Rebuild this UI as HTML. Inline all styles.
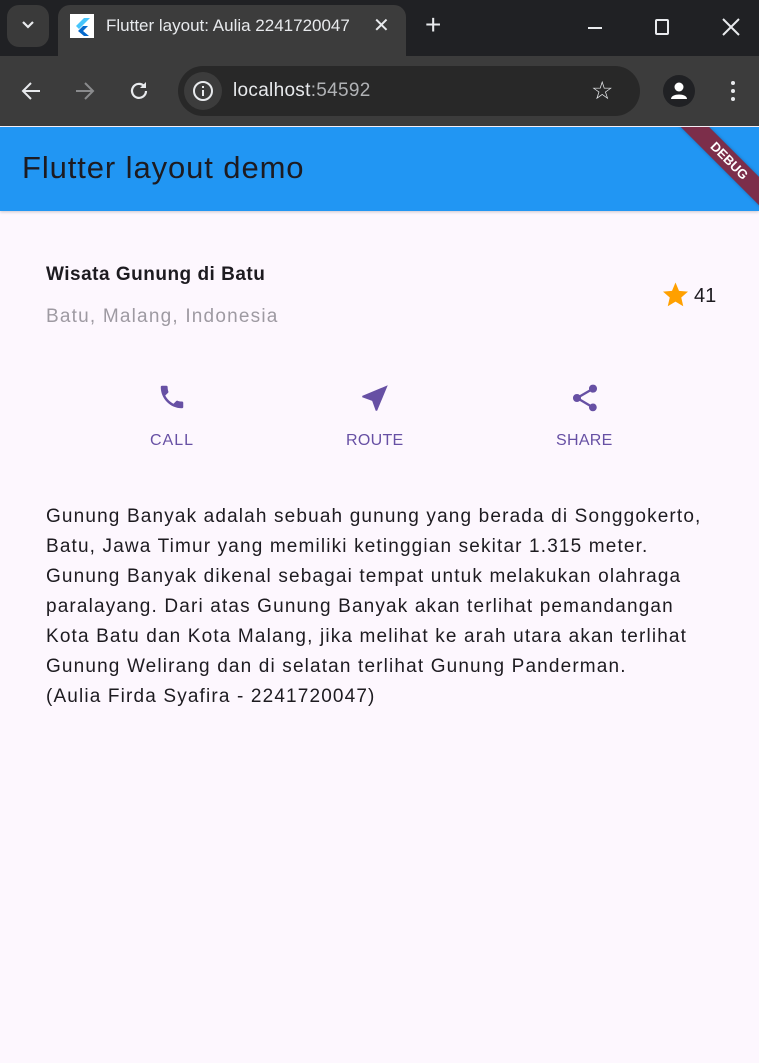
<!DOCTYPE html>
<html><head><style>
*{margin:0;padding:0;box-sizing:border-box}
body{width:759px;height:1063px;overflow:hidden;background:#fdf7fe;font-family:"Liberation Sans",sans-serif;position:relative}
.abs{position:absolute}
</style></head><body>
<div class="abs" style="left:0;top:0;width:759px;height:56px;background:#202124"></div>
<div class="abs" style="left:7px;top:5px;width:42px;height:42px;border-radius:12px;background:#3a3a3a"></div>
<svg class="abs" style="left:20px;top:19px" width="16" height="12"><path d="M3 3l5 5 5-5" stroke="#e8eaed" stroke-width="2.2" fill="none"/></svg>
<div class="abs" style="left:58px;top:5px;width:348px;height:52px;border-radius:12px 12px 0 0;background:#3c3c3c"></div>
<div class="abs" style="left:70px;top:14px;width:24px;height:24px;background:#fff"></div>
<svg class="abs" style="left:72px;top:16px" width="20" height="20"><path d="M12 2L4 10l3 3 11-11z" fill="#47c5fb"/><path d="M11 10l-5 5 6 5h5l-6-5 5-5z" fill="#0569cc"/></svg>
<div class="abs" style="left:106px;top:16px;font-size:17px;color:#e8eaed;white-space:nowrap;width:254px;overflow:hidden">Flutter layout: Aulia 2241720047</div>
<div class="abs" style="left:373px;top:13px;font-size:20px;color:#e8eaed">✕</div>
<div class="abs" style="left:425px;top:9px;font-size:28px;color:#e8eaed;font-weight:300">+</div>
<div class="abs" style="left:588px;top:27px;width:14px;height:2px;background:#e8eaed"></div>
<div class="abs" style="left:655px;top:19px;width:14px;height:16px;border:2px solid #e8eaed;border-radius:2px"></div>
<svg class="abs" style="left:722px;top:18px" width="18" height="18"><path d="M1 1l16 16M17 1L1 17" stroke="#e8eaed" stroke-width="2"/></svg>
<div class="abs" style="left:0;top:56px;width:759px;height:70px;background:#3c3c3c"></div>
<svg class="abs" style="left:20px;top:80px" width="22" height="22"><path d="M20 11H4M11 3l-8 8 8 8" stroke="#e8eaed" stroke-width="2" fill="none"/></svg>
<svg class="abs" style="left:74px;top:80px" width="22" height="22"><path d="M2 11h16M11 3l8 8-8 8" stroke="#8a8b8d" stroke-width="2" fill="none"/></svg>
<svg class="abs" style="left:128px;top:80px" width="22" height="22"><path d="M18 11a7 7 0 1 1-2-5" stroke="#e8eaed" stroke-width="2.2" fill="none"/><path d="M18 2v6h-6z" fill="#e8eaed"/></svg>
<div class="abs" style="left:178px;top:66px;width:462px;height:50px;border-radius:25px;background:#282828"></div>
<div class="abs" style="left:184px;top:72px;width:38px;height:38px;border-radius:19px;background:#3c3c3c"></div>
<svg class="abs" style="left:192px;top:80px" width="22" height="22"><circle cx="11" cy="11" r="9" stroke="#e8eaed" stroke-width="2" fill="none"/><path d="M11 10v6M11 6v2" stroke="#e8eaed" stroke-width="2"/></svg>
<div class="abs" style="left:233px;top:80px;font-size:19px;color:#e8eaed;letter-spacing:0.3px">localhost<span style="color:#b0b2b5">:54592</span></div>
<div class="abs" style="left:591px;top:76px;font-size:25px;color:#e8eaed">☆</div>
<div class="abs" style="left:663px;top:75px;width:32px;height:32px;border-radius:16px;background:#202124"></div>
<svg class="abs" style="left:668px;top:80px" width="22" height="22"><circle cx="11" cy="7" r="4.5" fill="#fff"/><path d="M3 19c0-6 16-6 16 0z" fill="#fff"/></svg>
<svg class="abs" style="left:728px;top:80px" width="10" height="22"><circle cx="5" cy="3" r="2" fill="#e8eaed"/><circle cx="5" cy="11" r="2" fill="#e8eaed"/><circle cx="5" cy="19" r="2" fill="#e8eaed"/></svg>
<div class="abs" style="left:0;top:127px;width:759px;height:84px;background:#2196f3;box-shadow:0 1px 3px rgba(0,0,0,.2);overflow:hidden">
<div class="abs" style="left:22px;top:23px;font-size:31px;color:#1d1b20;letter-spacing:0.9px">Flutter layout demo</div>
<div class="abs" style="left:654px;top:24px;width:150px;height:20px;background:#7c2e4a;transform:rotate(45deg);color:#fff;font-weight:bold;font-size:13px;text-align:center;line-height:20px;box-shadow:0 0 3px rgba(0,0,0,.3)">DEBUG</div>
</div>
<div class="abs" style="left:46px;top:264px;font-size:19px;font-weight:bold;color:#1d1b20;letter-spacing:0.5px">Wisata Gunung di Batu</div>
<div class="abs" style="left:46px;top:306px;font-size:19px;color:#9e9aa2;letter-spacing:1.2px">Batu, Malang, Indonesia</div>
<svg class="abs" style="left:660px;top:280px" width="31" height="30" viewBox="0 0 24 24"><path d="M12 17.3l6.2 3.7-1.6-7 5.4-4.7-7.2-.6L12 2 9.2 8.7 2 9.3l5.4 4.7-1.6 7z" fill="#ffa000"/></svg>
<div class="abs" style="left:694px;top:285px;font-size:20px;color:#1d1b20">41</div>
<svg class="abs" style="left:157px;top:382px" width="30" height="30" viewBox="0 0 24 24"><path d="M6.6 10.8c1.4 2.8 3.8 5.1 6.6 6.6l2.2-2.2c.3-.3.7-.4 1-.2 1.1.4 2.3.6 3.6.6.6 0 1 .4 1 1V20c0 .6-.4 1-1 1C10.6 21 3 13.4 3 4c0-.6.4-1 1-1h3.5c.6 0 1 .4 1 1 0 1.3.2 2.5.6 3.6.1.3 0 .7-.2 1z" fill="#6750a4"/></svg>
<div class="abs" style="left:150px;top:432px;font-size:16px;color:#6750a4;letter-spacing:1px">CALL</div>
<svg class="abs" style="left:358px;top:381px" width="34" height="34" viewBox="0 0 24 24"><path d="M21 3L3 10.5v1l7 2.5 2.5 7h1z" fill="#6750a4"/></svg>
<div class="abs" style="left:346px;top:432px;font-size:16px;color:#6750a4;letter-spacing:0.3px">ROUTE</div>
<svg class="abs" style="left:569px;top:382px" width="32" height="32" viewBox="0 0 24 24"><path d="M18 16.1c-.8 0-1.4.3-2 .8l-7.1-4.2c.1-.2.1-.5.1-.7s0-.5-.1-.7L16 7.2c.5.5 1.2.8 2 .8 1.7 0 3-1.3 3-3s-1.3-3-3-3-3 1.3-3 3c0 .2 0 .5.1.7L8 9.8C7.5 9.3 6.8 9 6 9c-1.7 0-3 1.3-3 3s1.3 3 3 3c.8 0 1.5-.3 2-.8l7.1 4.2c-.1.2-.1.4-.1.6 0 1.6 1.3 2.9 2.9 2.9s2.9-1.3 2.9-2.9-1.2-2.9-2.8-2.9z" fill="#6750a4"/></svg>
<div class="abs" style="left:556px;top:432px;font-size:16px;color:#6750a4;letter-spacing:0.3px">SHARE</div>
<div class="abs" style="left:46px;top:502px;width:713px;font-size:19px;line-height:30px;color:#1d1b20;letter-spacing:1.15px;white-space:nowrap">Gunung Banyak adalah sebuah gunung yang berada di Songgokerto,<br>Batu, Jawa Timur yang memiliki ketinggian sekitar 1.315 meter.<br>Gunung Banyak dikenal sebagai tempat untuk melakukan olahraga<br>paralayang. Dari atas Gunung Banyak akan terlihat pemandangan<br>Kota Batu dan Kota Malang, jika melihat ke arah utara akan terlihat<br>Gunung Welirang dan di selatan terlihat Gunung Panderman.<br>(Aulia Firda Syafira - 2241720047)</div>
</body></html>
